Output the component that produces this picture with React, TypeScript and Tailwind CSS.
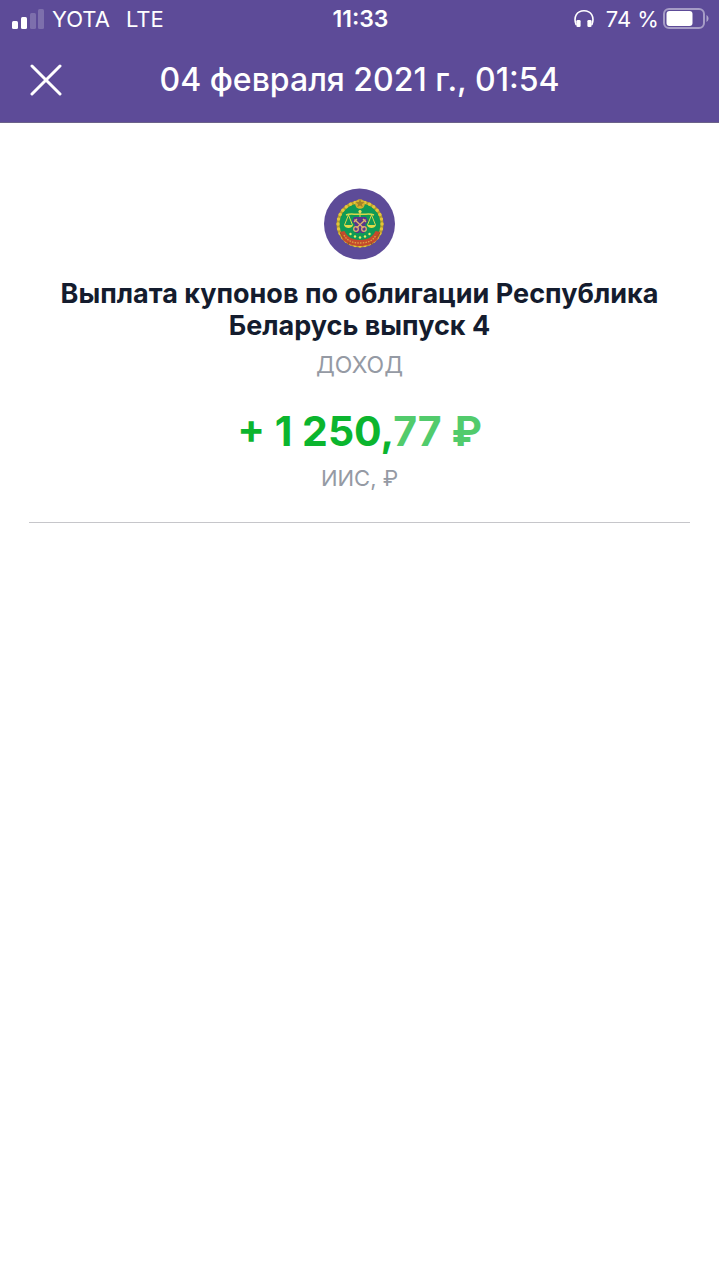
import React from 'react';

const beads = Array.from({ length: 28 }, (_, i) => {
  const angle = (i / 28) * Math.PI * 2;
  return { x: 36 + Math.cos(angle) * 22, y: 36 + Math.sin(angle) * 22 };
});

function SignalIcon() {
  return (
    <svg className="w-8 h-5" viewBox="0 0 32 20" fill="white" aria-hidden="true">
      <rect x="0" y="12" width="6" height="8" rx="1.5" />
      <rect x="9" y="8" width="6" height="12" rx="1.5" />
      <rect x="18" y="4" width="6" height="16" rx="1.5" opacity="0.2" />
      <rect x="26" y="0" width="6" height="20" rx="1.5" opacity="0.2" />
    </svg>
  );
}

function HeadphonesIcon() {
  return (
    <svg className="w-5 h-5" viewBox="0 0 20 20" aria-hidden="true">
      <path d="M2.2 16C-1 8 2.800 1.800 10 1.800S21 8 17.800 16" fill="none" stroke="white" strokeWidth="1.6" />
      <rect x="2.400" y="11" width="4.200" height="7" rx="1.2" fill="white" />
      <rect x="13.400" y="11" width="4.200" height="7" rx="1.2" fill="white" />
    </svg>
  );
}

function BatteryIcon() {
  return (
    <svg className="w-[46px] h-[22px]" viewBox="0 0 46 22" aria-hidden="true">
      <rect x="1" y="1" width="40" height="19" rx="5" fill="none" stroke="white" strokeOpacity="0.45" strokeWidth="2" />
      <rect x="3.5" y="3" width="26" height="15" rx="3" fill="white" />
      <path d="M43.500 7c2.700 1.500 2.700 5.500 0 7z" fill="white" opacity="0.5" />
    </svg>
  );
}

function Emblem() {
  return (
    <svg className="w-[72px] h-[72px]" viewBox="0 0 72 72" fill="none" aria-hidden="true">
      <circle cx="35.5" cy="36" r="35.5" fill="#5d4b98" />
      <circle cx="36" cy="36" r="22" fill="#0f9a56" stroke="#b89c2b" strokeWidth="3" />
      {beads.map((b, i) => (
        <circle key={i} cx={b.x} cy={b.y} r="1.7" fill="#e4c63a" />
      ))}
      {/* Crest on top */}
      <circle cx="36" cy="16" r="4.8" fill="#d6b12c" />
      <path d="M36 11l1.200 3 3.200.2-2.500 2 .9 3-2.800-1.700-2.800 1.700.9-3-2.500-2 3.200-.2z" fill="#a1822a" />
      {/* Scales */}
      <g stroke="#d9d84b" strokeWidth="1">
        <path d="M22 27c5-2 9 0 14-1 5 1 9-1 14 1" strokeWidth="1.5" />
        <path d="M36 22v7M24.500 27l-4 10M24.500 27l4 10M47.500 27l-4 10M47.500 27l4 10" />
      </g>
      <path d="M20 37h9c-1 4-8 4-9 0zM43 37h9c-1 4-8 4-9 0z" fill="#e3d94a" />
      <circle cx="36" cy="23.5" r="1.6" fill="#f0dc58" />
      {/* Crossed keys */}
      <path d="M30 29h12l2 4-3 4 2 3-3 5h-3l-1-2-1 2h-3l-3-5 2-3-3-4z" fill="#59358b" />
      <g stroke="#deb26c" strokeWidth="1.3">
        <path d="M30.500 31.500l9 8.500M41.500 31.500l-9 8.500M30 34l3-3M42 34l-3-3" />
        <circle cx="32" cy="41" r="2.3" />
        <circle cx="40" cy="41" r="2.3" />
      </g>
      <g fill="#e8ef62">
        <circle cx="26.5" cy="46" r="1.2" />
        <circle cx="31" cy="48.5" r="1.2" />
        <circle cx="36" cy="49.5" r="1.2" />
        <circle cx="41" cy="48.5" r="1.2" />
        <circle cx="45.5" cy="46" r="1.2" />
      </g>
      {/* Ribbon */}
      <path d="M15.500 44l5-1c2 5 7 9 15.500 9s13.500-4 15.500-9l5 1-3 7c-4 5-10 7-17.500 7s-13.500-2-17.500-7z" fill="#c44a2c" />
      <path d="M20 47c3 6 9 8 16 8s13-2 16-8" stroke="#dda344" strokeWidth="1.3" strokeDasharray="1.5 1.2" />
      <path d="M16 45l4 5M56 45l-4 5M25 54l-1 3M47 54l1 3" stroke="#8f5b26" strokeWidth="1" />
    </svg>
  );
}

export default function App() {
  return (
    <div className="min-h-screen bg-white font-['Inter','Liberation_Sans',sans-serif]">
      <header className="bg-[#5d4b98] text-white border-b border-[#6b6289]">
        {/* Status bar */}
        <div className="grid grid-cols-3 items-center h-[38px] pl-3 pr-[10px] text-[22px] leading-8">
          <div className="flex items-center gap-2">
            <SignalIcon />
            <span>YOTA</span>
            <span className="ml-2">LTE</span>
          </div>
          <time className="text-center text-[23px] font-semibold">11:33</time>
          <div className="flex items-center justify-end gap-1 whitespace-nowrap">
            <HeadphonesIcon />
            <span className="ml-2">74 %</span>
            <BatteryIcon />
          </div>
        </div>

        {/* Title bar */}
        <div className="grid grid-cols-[48px_1fr_48px] items-center h-[84px] px-[22px]">
          <button type="button" aria-label="Закрыть" className="flex items-center justify-center w-12 h-12">
            <svg className="w-8 h-8" viewBox="0 0 32 32" fill="none" stroke="white" strokeWidth="3" strokeLinecap="round">
              <path d="M2 2l28 28M30 2L2 30" />
            </svg>
          </button>
          <h1 className="text-center text-[32px] leading-10 font-medium">04 февраля 2021 г., 01:54</h1>
        </div>
      </header>

      <main className="px-[29px] pt-[65px]">
        <section className="flex flex-col items-center text-center border-b border-[#c6c6ca] pb-7">
          <Emblem />
          <h2 className="mt-[18px] px-6 text-[27px] leading-8 font-bold text-[#141c2e]">
            Выплата купонов по облигации Республика Беларусь выпуск 4
          </h2>
          <p className="mt-[7px] text-[23px] leading-8 text-[#959aa4]">ДОХОД</p>
          <p className="mt-[26px] text-[41px] leading-12 font-bold text-[#0bb52e]">
            + 1 250,<span className="text-[#52cb6c]">77 ₽</span>
          </p>
          <p className="mt-[7px] text-[22px] leading-8 text-[#959aa4]">ИИС, ₽</p>
        </section>
      </main>
    </div>
  );
}
